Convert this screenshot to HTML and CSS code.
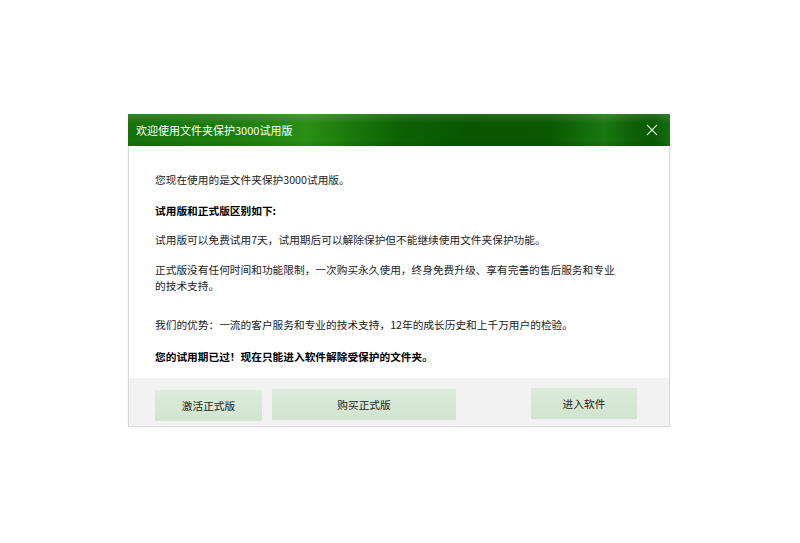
FILE: index.html
```html
<!doctype html>
<html lang="zh-CN">

<head>
    <meta charset="utf-8">
    <meta name="viewport" content="width=device-width, initial-scale=1">
    <title>欢迎使用文件夹保护3000试用版</title>
    <link rel="stylesheet" href="styles.css">
</head>

<body>
    <div class="dialog">
        <div class="titlebar">
            <span class="title">欢迎使用文件夹保护3000试用版</span>
            <span class="close">
                <svg width="12" height="12" viewBox="0 0 12 12">
                    <path d="M1 1 L11 11 M11 1 L1 11" stroke="#d6ead4" stroke-width="1.1" fill="none"/>
                </svg>
            </span>
        </div>

        <div class="content">
            <p class="p1">您现在使用的是文件夹保护3000试用版。</p>
            <p class="p2 bold">试用版和正式版区别如下:</p>
            <p class="p3">试用版可以免费试用7天，试用期后可以解除保护但不能继续使用文件夹保护功能。</p>
            <p class="p4">正式版没有任何时间和功能限制，一次购买永久使用，终身免费升级、享有完善的售后服务和专业的技术支持。</p>
            <p class="p6">我们的优势：一流的客户服务和专业的技术支持，12年的成长历史和上千万用户的检验。</p>
            <p class="p7 bold">您的试用期已过！现在只能进入软件解除受保护的文件夹。</p>
        </div>

        <div class="footer">
            <button class="btn btn-activate">激活正式版</button>
            <button class="btn btn-buy">购买正式版</button>
            <button class="btn btn-enter">进入软件</button>
        </div>
    </div>
</body>

</html>
```

FILE: styles.css
```css
html, body {
    margin: 0;
    height: 100%;
    background: #ffffff;
}

body {
    display: flex;
    align-items: center;
    justify-content: center;
    font-family: "Noto Sans CJK SC", "Noto Sans", sans-serif;
    font-size: 10.7px;
    color: #222222;
}

.dialog {
    width: 542px;
    height: 313px;
    box-sizing: border-box;
    border: 1px solid #d9d9d9;
    border-top: none;
    background: #ffffff;
    display: flex;
    flex-direction: column;
    margin-left: -2px;
    margin-top: -2px;
    box-shadow: 0 0 3px rgba(0, 0, 0, 0.06);
}

.titlebar {
    height: 32px;
    flex: none;
    display: flex;
    align-items: center;
    justify-content: space-between;
    padding: 0 12px 0 8px;
    margin: 0 -1px;
    background:
        linear-gradient(to bottom, rgba(255,255,255,0.12) 0%, rgba(255,255,255,0) 30%, rgba(0,0,0,0) 80%, rgba(0,0,0,0.08) 100%),
        linear-gradient(to right, #17720c 0%, #1e7e0e 20%, #2a8f14 33%, #1b790c 41%, #0d6204 50%, #085700 62%, #0a5901 78%, #1a7812 88%, #0e6005 93%, #0a5902 97%, #15700e 100%);
    color: #ffffff;
}

.title {
    font-size: 11px;
}

.close {
    display: flex;
    align-items: center;
}

.content {
    height: 232px;
    box-sizing: border-box;
    padding: 26px 28px 0 26px;
    flex: none;
}

.content p {
    margin: 0;
    line-height: 16px;
    width: 466px;
}

.content .bold {
    font-weight: bold;
    color: #000000;
}

.p2 { margin-top: 15px !important; }
.p3 { margin-top: 13px !important; }
.p4 { margin-top: 14px !important; }
.p6 { margin-top: 23px !important; }
.p7 { margin-top: 16px !important; }

.footer {
    flex: 1;
    background: #f2f2f2;
    display: flex;
    align-items: flex-start;
    padding: 12px 32px 0 26px;
}

.btn {
    height: 31px;
    border: none;
    background: linear-gradient(#dcebda, #d1e4d0);
    font-family: "Noto Sans CJK SC", "Noto Sans", sans-serif;
    font-size: 10.7px;
    color: #222222;
    padding: 0;
}

.btn-activate {
    width: 107px;
}

.btn-buy {
    width: 184px;
    margin-left: 10px;
    margin-top: -1px;
}

.btn-enter {
    width: 106px;
    margin-left: auto;
    margin-top: -2px;
}
```
